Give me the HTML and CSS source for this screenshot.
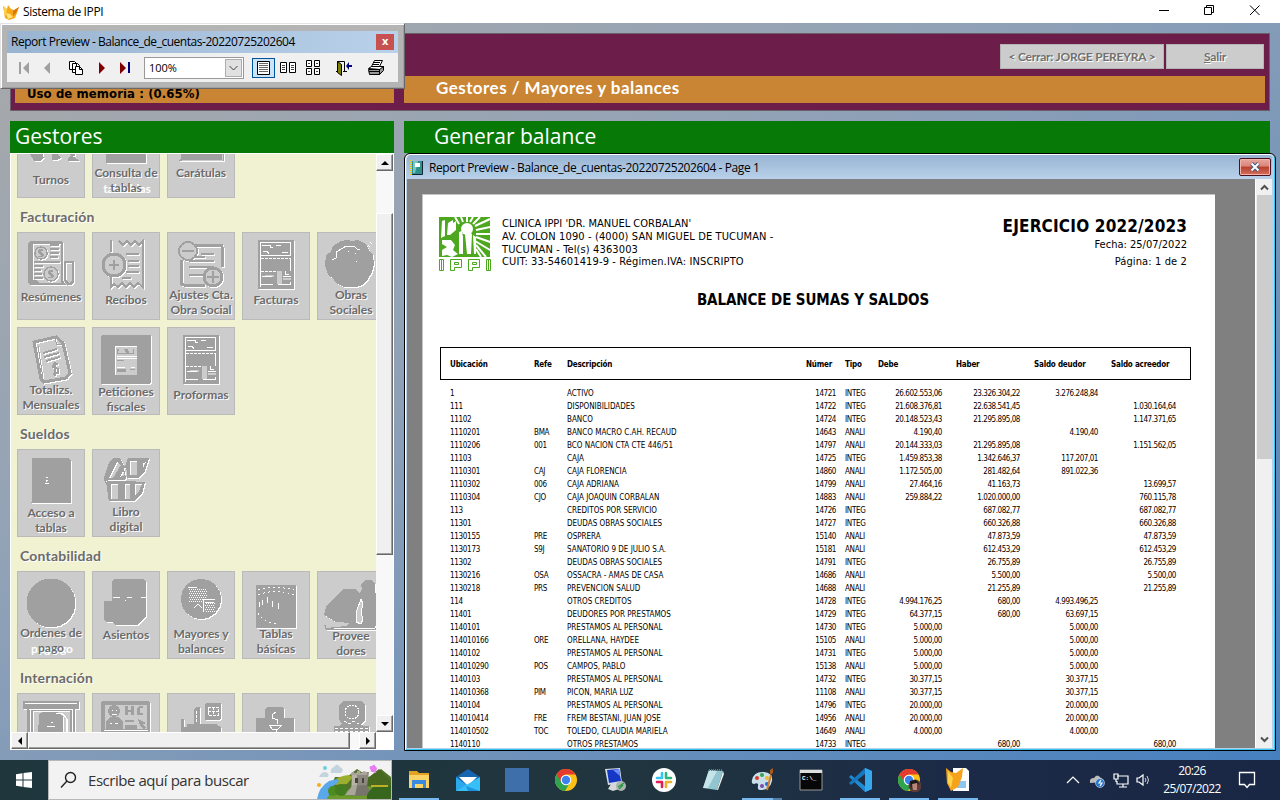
FILE: index.html
```html
<!DOCTYPE html>
<html lang="es">
<head>
<meta charset="utf-8">
<title>Sistema de IPPI</title>
<link rel="stylesheet" href="styles.css">
</head>
<body>
<svg width="0" height="0" class="defs">
  <defs>
    <symbol id="fox" viewBox="0 0 16 16"><path d="M0 2l4 3 1-4 3 4 3 1 5-3-2 6-2 5-6 2-4-2z" fill="#f7a81b"/><path d="M0 2l4 3-1 5-1 3z" fill="#fcd34a"/><path d="M10 7l6-4-3 6-3 3z" fill="#d9780c"/><path d="M3 9l4 1 3 3-5 2z" fill="#ffe57a"/></symbol>
    <symbol id="invoice" viewBox="0 0 68 58"><path d="M16 8h36v49H16z"/><path class="hl" d="M18.500 55V10.500h30M18.500 23.500h30M48.500 11v12M18.500 52.500h12M36 52.500h12v-3M48.500 27v12M20 13.500h8v2h3M34 13.500h5M21 19.500h4l2 2M40 20.500h6"/><path class="hl" stroke-dasharray="3 1" d="M19 26.500h30M19 39.500h15"/><path class="bg" d="M35 39h5v13h-5zM41 46h8v2h-8zM23 43h9v2h-9z"/><path class="hl" d="M20 44.500h10M41 44.500h8M43 39v3h4"/></symbol>
    <symbol id="chrome" viewBox="0 0 24 24"><circle cx="12" cy="12" r="11" fill="#fbc116"/><path d="M2.500 6.500A11 11 0 0 0 11 23l5.500-9.500L12 12l-4 1z" fill="#2da44e"/><path d="M2.500 6.500A11 11 0 0 1 21.600 6.600H12a5.500 5.500 0 0 0-5 7z" fill="#e53a2f"/><circle cx="12" cy="12" r="5.300" fill="#fff"/><circle cx="12" cy="12" r="4.200" fill="#3b82f0"/></symbol>
  </defs>
</svg>
<div class="screen">
  <header class="titlebar">
    <svg class="app-icon" width="16" height="16"><use href="#fox"/></svg>
    <span class="app-title">Sistema de IPPI</span>
    <svg class="win-controls" width="104" height="20" viewBox="0 0 104 20" fill="none" stroke="#000"><path d="M0 8.500h10M45.500 5.500h7v7h-7zM47.500 5.500v-2h7v7h-2M91 3.500l9.500 9.500M100.500 3.500L91 13"/></svg>
  </header>

  <main class="desktop">
    <section class="banner">
      <div class="banner-buttons"><button class="flat">&lt; Cerrar: JORGE PEREYRA &gt;</button><button class="flat salir"><u>S</u>alir</button></div>
      <div class="banner-strips">
        <div class="strip memory">Uso de memoria : (0.65%)</div>
        <div class="strip crumb">Gestores / Mayores y balances</div>
      </div>
    </section>

    <div class="columns">
      <section class="left">
        <h2 class="green">Gestores</h2>
        <div class="nav-frame">
          <div class="nav">
            <div class="row first">
              <div class="tile"><svg class="ico" viewBox="1 1 66 54"><path d="M12 42h14v5h2l-5 4h-6zM34 44h6l4 4-4 2h-5v-5zM52 42h6v4h-3l7 4v1H51v-3l3-2z"/></svg><span class="cap s7">Turnos</span></div>
              <div class="tile"><svg class="ico" viewBox="1 1 66 54"><path d="M15 20h39v33H14z"/></svg><span class="cap s1">Consulta de<br><span class="ghost">tablas</span></span></div>
              <div class="tile"><svg class="ico" viewBox="1 1 66 54"><path d="M15 20h42v31H11l3-2z"/><path class="lt" d="M15 50h40v-7h1v8H15z"/></svg><span class="cap s1">Carátulas</span></div>
            </div>
            <h3>Facturación</h3>
            <div class="row">
              <div class="tile"><svg class="ico" viewBox="1 1 66 54"><path fill-rule="evenodd" d="M15 9h28q3 0 3 3v36l3 5H16q-5 0-5-5V13q0-4 4-4zm1 3v36h4l2 3h22V12z"/><path fill-rule="evenodd" d="M47 29h10v22q-4 4-8 1l-2-4zm2 2v17l3 3 3-3V31z"/><g class="ln"><circle cx="24" cy="21" r="6"/><circle cx="34" cy="42" r="7"/><path d="M33 13h9M33 17h9M33 21h9M33 25h8M17 30h26M17 34h9M17 38h7M17 42h8M17 46h9"/></g><path d="M22 17h4v2h-3l4 4-1 2h-5v-1h3l-3-4zM32 38h4v2h-3l4 4-1 2h-5v-1h3l-3-4z"/></svg><span class="cap s3">Resúmenes</span></div>
              <div class="tile"><svg class="ico" viewBox="1 1 66 54"><g class="ln"><path stroke-width="2" d="M19 8v12M19 45v10l3-3 4 3 4-4 4 4 4-4 4 4 4-4 5 4V9l-4 4-4-4-4 4-4-4-4 4-4-4"/><circle cx="22" cy="33" r="11" stroke-width="3"/><path stroke-width="2" d="M22 28v10M17 33h10M34 22h13M36 29h11M36 34h11M34 40h13M30 46h9"/></g></svg><span class="cap s6">Recibos</span></div>
              <div class="tile"><svg class="ico" viewBox="1 1 66 54"><g class="ln"><path stroke-width="3" d="M28 13h25q2 0 2 2v20M14 28v23q0 2 3 2h21"/><circle cx="21" cy="19" r="9" stroke-width="2"/><circle cx="46" cy="45" r="9" stroke-width="3"/><path stroke-width="2" d="M15 19h12M46 39v12M40 45h12M34 22h13M22 29h25M22 35h25M22 43h15M28 25h10"/></g></svg><span class="cap s1">Ajustes Cta.<br>Obra Social</span></div>
              <div class="tile"><svg class="ico" viewBox="1 1 66 54"><use href="#invoice" width="68" height="58"/></svg><span class="cap s6">Facturas</span></div>
              <div class="tile"><svg class="ico" viewBox="1 1 66 54"><path d="M24 9l6-1 5 1 6-1 6 3 3 3 3 6 3 3 1 9-2 8-4 7-6 6-5 2H27l-8-4-3-5-5-3-3-10 1-10 5-3 2-6z"/><path class="hl" d="M15 28l4-2v-6l7-4 3-2h8l3 3h3M31 19h1M38 21h1M53 10h1M51 13h1M39 29h1"/></svg><span class="cap s1">Obras<br>Sociales</span></div>
            </div>
            <div class="row next">
              <div class="tile"><svg class="ico" viewBox="1 1 66 54"><g class="ln"><path stroke-width="3" d="M17 15l22-5 7 6 7 30-4 5-22 4-3-3z"/><path stroke-width="1" d="M21 19l5 32M38 11l2 7 7-1"/><path stroke-width="2" d="M26 26l14-4M27 30l15-4M29 34l14-4M41 37l-4 0-1 3 5 2 0 4-5 1M38 35v14"/></g></svg><span class="cap s1">Totalizs.<br>Mensuales</span></div>
              <div class="tile"><svg class="ico" viewBox="1 1 66 54"><rect x="9" y="8" width="50" height="49" rx="2"/><path class="bg" d="M23 20h22v28H23z"/><path class="hl" d="M23.500 48V19.500h21M25 29.500h20M25 31.500h20M25 40h8M39 40h4"/><path d="M25 22h17v5H25zM25 33h7v1h-7zM25 42h9v3h-9zM38 42h5v1h-5z"/><path class="bg" d="M27 22h5l2 4h-8zM36 22h5v4h-4z"/></svg><span class="cap s3">Peticiones<br>fiscales</span></div>
              <div class="tile"><svg class="ico" viewBox="1 1 66 54"><use href="#invoice" width="68" height="58"/></svg><span class="cap s6">Proformas</span></div>
            </div>
            <h3>Sueldos</h3>
            <div class="row">
              <div class="tile"><svg class="ico" viewBox="1 1 66 54"><path d="M15 9h37l2 3v42H14l1-2z"/><path class="hl" d="M29 28h2M28 34h4M30 31h1M29 33v-2"/></svg><span class="cap s2">Acceso a<br>tablas</span></div>
              <div class="tile"><svg class="ico" viewBox="1 1 66 54"><path fill-rule="evenodd" d="M12 29l5-15 4-5h7l7 13v6l-3 3H17l-4 3zm5 0h4l8-13-4-3zM28 28l3-6 2 4zM36 9h21l-4 13-6 7H34l-2-9zM38 12h7v14h-7zM51 14l3-1-3 6zM14 32h20l19 1-3 12-8 7H17l-1-5zM19 35h7v15h-7zM33 35h5v15h-5zM43 35h7l-4 9-3 2z"/></svg><span class="cap s1">Libro<br>digital</span></div>
            </div>
            <h3>Contabilidad</h3>
            <div class="row">
              <div class="tile"><svg class="ico" viewBox="1 1 66 54"><circle cx="34" cy="32" r="24.500"/></svg><span class="cap s0">Ordenes de<br><span class="ghost">pago</span></span></div>
              <div class="tile"><svg class="ico" viewBox="1 1 66 54"><path d="M22 8h30l2 3v35l-9 8H23l-3-3h-6l-2-3V30h8V10z"/><path class="hl" d="M21 26.500h7M35 26.500h5M49 26.500h5M33 29.500h1"/></svg><span class="cap s2">Asientos</span></div>
              <div class="tile"><svg class="ico" viewBox="1 1 66 54"><circle cx="34" cy="28" r="20"/><g class="dots"><path class="hl" stroke-dasharray="1 1" d="M22 18.500h17M22 22.500h17M22 26.500h17M22 30.500h13M38 34.500h9M38 38.500h9"/><path class="hl" stroke-dasharray="1 1" d="M23 20.500h17M23 24.500h17M23 28.500h15M39 32.500h9M39 36.500h9M39 40.500h9"/></g><path class="hl" d="M21 16.500h9M36.500 41V28.500h11M38 31.500h9M27 37l4-4 4 4"/></svg><span class="cap s1">Mayores y<br>balances</span></div>
              <div class="tile"><svg class="ico" viewBox="1 1 66 54"><path d="M14 14h40v43H14z"/><path class="hl" stroke-dasharray="2 3" d="M16 19q18-5 36 0M16 24q18-7 36 0M16 42q6 10 18 11"/><path class="hl" d="M17.500 31v5M20.500 29v5M25.500 26v6M30.500 30v6M36.500 32v6"/></svg><span class="cap s1">Tablas<br>básicas</span></div>
              <div class="tile"><svg class="ico" viewBox="1 1 66 54"><path d="M7 44l2-8 10-11 7-7h12l5 4 2-4-1-5 4-4h7l3 4v8l5 9 2 29H9l-2-5h17z"/><path class="bg" d="M44 28l-4 11-1 12 5 2 2-5-2-7 2-8zM9 50l24 2-4 3-20 2z"/><path class="hl" d="M44 28l-4 11-1 12 5 2 2-5-2-7 2-8zM17 57h41l3-4"/></svg><span class="cap s3">Provee<br>dores</span></div>
            </div>
            <h3>Internación</h3>
            <div class="row">
              <div class="tile"><svg class="ico" viewBox="1 1 66 54"><path fill-rule="evenodd" d="M6 8h56v8h-4v28H10V16H6zm10 10v26h5l1-23 4-2h14l6 4v21h7V18z"/><path class="hl" d="M8 10.500h52M12 16.500h44M13.500 17v25M55.500 17v25M34 29h2M30 33h8M39 20h6l4 5v16"/></svg></div>
              <div class="tile"><svg class="ico" viewBox="1 1 66 54"><rect x="9" y="8" width="49" height="42" rx="3"/><path class="bg" d="M13 12h42v24H13z"/><circle cx="22" cy="18" r="6"/><path d="M14 36v-8l5-4h7l5 4v8zM33 13h3v4h3v-4h3v9h-3v-3h-3v3h-3zM47 13h4v2h-3v5h3v2h-6v-7zM33 27h9v2h-9zM33 32h12v4H33zM46 26l8 4-3 1 3 4-3 1-3-4z"/><path class="hl" d="M20 17h1M24 17h1M20 21h5M18 30h2M23 30h3M12 37.500h44"/></svg></div>
              <div class="tile"><svg class="ico" viewBox="1 1 66 54"><rect x="38" y="10" width="16" height="17" rx="2"/><path d="M14 26h3v8h3v-3h29l5 3v14H14zM27 16l3-2h3v18h-6z"/><path class="hl" stroke-dasharray="3 1" d="M41 14h10v8H41zM41 18h10M46 14v8M29 18v12"/></svg></div>
              <div class="tile"><svg class="ico" viewBox="1 1 66 54"><path d="M25 14h16l1 2v9h10v20H14V25h9v-9z"/><path class="hl" d="M34 19l-4 3v3l6 2-1 4M27 32h13l-4 4h-6zM34 36v5"/></svg></div>
              <div class="tile"><svg class="ico" viewBox="1 1 66 54"><path d="M26 8h18l4 4v15l-4 5 4 1h4v7H17v-7h5l3-2-3-5V13z"/><circle class="hl" stroke-dasharray="2 1" cx="35" cy="19" r="7"/><path class="hl" stroke-dasharray="3 2" d="M18 35h34M18 38h34M27 28l5 3 5-3 5 3"/></svg></div>
            </div>
          </div>
          <div class="vbar"><i class="sb"><b class="tri up"></b></i><i class="vthumb"></i><i class="sb"><b class="tri down"></b></i></div>
          <div class="hbar"><i class="sb"><b class="tri lf"></b></i><i class="hthumb"></i><i class="sb end"><b class="tri rt"></b></i></div>
        </div>
      </section>

      <section class="right">
        <h2 class="green wide">Generar balance</h2>
        <div class="window">
          <div class="win-title">
            <svg width="13" height="15" viewBox="0 0 13 15"><path d="M1 0v15" stroke="#e8d000" stroke-width="2" stroke-dasharray="1 1"/><path d="M2 1h10v13H2z" fill="#2f8f8b"/><path d="M3 1h5L5 13H3z" fill="#7cc4bf"/><path d="M5 3h5v4H5z" fill="#fff"/><path d="M12.500 1v13.500H2" stroke="#123" fill="none"/></svg>
            <span class="win-name">Report Preview - Balance_de_cuentas-20220725202604 - Page 1</span>
            <span class="close"><svg width="12" height="10" viewBox="0 0 12 10"><path d="M2.500 1.500l7 7M9.500 1.500l-7 7" stroke="#4a5a7a" stroke-width="4"/><path d="M2.500 1.500l7 7M9.500 1.500l-7 7" stroke="#fff" stroke-width="2"/></svg></span>
          </div>
          <div class="win-body">
            <div class="gray">
              <article class="page">
                <div class="head">
                  <svg width="52" height="54" viewBox="0 0 52 54"><path d="M0 0h51v40H0z" fill="#4ea81f"/><g fill="#fff"><path d="M3 4l3-1v16l-4 2zM9 6l5-3v3l3-2v9l-6 5H8zM3 23h9l4 5-2 5 5 4-6 3-5-2-5 1v-6l5-3-5-3zM20 15l3-1 1 6v17h-4V22zM26 17l4-2 3 2-1 20h-4zM34 18l3 2v17h-2z"/><circle cx="28" cy="12" r="6"/></g><g stroke="#fff" stroke-width="2"><path d="M20 7l-4-7M24 5l-2-5M28 5V0M31 5l3-5M34 7l7-7M36 9l15-7M37 13l14-3M37 17l14 0M37 20l14 5M36 24l15 9M37 28l10 12M37 32l5 8"/></g><g fill="none" stroke="#4ea81f" stroke-width="1"><path d="M.5 42.500h4v11h-4zM2.500 43v10M11.500 53.500v-11h11v8h-7v3zM15.500 45.500h4v2h-4zM29.500 53.500v-11h11v8h-7v3zM33.500 45.500h4v2h-4zM47.500 42.500h4v11h-4zM49.500 43v10"/></g></svg>
                  <address><span>CLINICA IPPI 'DR. MANUEL CORBALAN'</span><span class="wider">AV. COLON 1090 - (4000) SAN MIGUEL DE TUCUMAN -</span><span class="wider">TUCUMAN - Tel(s) 4363003</span><span class="wider">CUIT: 33-54601419-9 - Régimen.IVA: INSCRIPTO</span></address>
                  <div class="meta"><strong>EJERCICIO 2022/2023</strong><span>Fecha: 25/07/2022</span><span class="wider">Página: 1 de 2</span></div>
                </div>
                <h1>BALANCE DE SUMAS Y SALDOS</h1>
                <div class="thead"><span>Ubicación</span><span>Refe</span><span>Descripción</span><span>Númer</span><span>Tipo</span><span>Debe</span><span>Haber</span><span>Saldo deudor</span><span>Saldo acreedor</span></div>
                <table class="rows">
                  <colgroup><col class="c1"><col class="c2"><col class="c3"><col class="c4"><col class="c5"><col class="c6"><col class="c7"><col class="c8"><col class="c9"></colgroup>
                  <tbody>
                  <tr><td>1<td><td>ACTIVO<td>14721<td>INTEG<td>26.602.553,06<td>23.326.304,22<td>3.276.248,84<td>
                  <tr><td>111<td><td>DISPONIBILIDADES<td>14722<td>INTEG<td>21.608.376,81<td>22.638.541,45<td><td>1.030.164,64
                  <tr><td>11102<td><td>BANCO<td>14724<td>INTEG<td>20.148.523,43<td>21.295.895,08<td><td>1.147.371,65
                  <tr><td>1110201<td>BMA<td>BANCO MACRO C.AH. RECAUD<td>14643<td>ANALI<td>4.190,40<td><td>4.190,40<td>
                  <tr><td>1110206<td>001<td>BCO NACION CTA CTE 446/51<td>14797<td>ANALI<td>20.144.333,03<td>21.295.895,08<td><td>1.151.562,05
                  <tr><td>11103<td><td>CAJA<td>14725<td>INTEG<td>1.459.853,38<td>1.342.646,37<td>117.207,01<td>
                  <tr><td>1110301<td>CAJ<td>CAJA FLORENCIA<td>14860<td>ANALI<td>1.172.505,00<td>281.482,64<td>891.022,36<td>
                  <tr><td>1110302<td>006<td>CAJA ADRIANA<td>14799<td>ANALI<td>27.464,16<td>41.163,73<td><td>13.699,57
                  <tr><td>1110304<td>CJO<td>CAJA JOAQUIN CORBALAN<td>14883<td>ANALI<td>259.884,22<td>1.020.000,00<td><td>760.115,78
                  <tr><td>113<td><td>CREDITOS POR SERVICIO<td>14726<td>INTEG<td><td>687.082,77<td><td>687.082,77
                  <tr><td>11301<td><td>DEUDAS OBRAS SOCIALES<td>14727<td>INTEG<td><td>660.326,88<td><td>660.326,88
                  <tr><td>1130155<td>PRE<td>OSPRERA<td>15140<td>ANALI<td><td>47.873,59<td><td>47.873,59
                  <tr><td>1130173<td>S9J<td>SANATORIO 9 DE JULIO S.A.<td>15181<td>ANALI<td><td>612.453,29<td><td>612.453,29
                  <tr><td>11302<td><td>DEUDAS OBRAS SOCIALES<td>14791<td>INTEG<td><td>26.755,89<td><td>26.755,89
                  <tr><td>1130216<td>OSA<td>OSSACRA - AMAS DE CASA<td>14686<td>ANALI<td><td>5.500,00<td><td>5.500,00
                  <tr><td>1130218<td>PRS<td>PREVENCION SALUD<td>14688<td>ANALI<td><td>21.255,89<td><td>21.255,89
                  <tr><td>114<td><td>OTROS CREDITOS<td>14728<td>INTEG<td>4.994.176,25<td>680,00<td>4.993.496,25<td>
                  <tr><td>11401<td><td>DEUDORES POR PRESTAMOS<td>14729<td>INTEG<td>64.377,15<td>680,00<td>63.697,15<td>
                  <tr><td>1140101<td><td>PRESTAMOS AL PERSONAL<td>14730<td>INTEG<td>5.000,00<td><td>5.000,00<td>
                  <tr><td>114010166<td>ORE<td>ORELLANA, HAYDEE<td>15105<td>ANALI<td>5.000,00<td><td>5.000,00<td>
                  <tr><td>1140102<td><td>PRESTAMOS AL PERSONAL<td>14731<td>INTEG<td>5.000,00<td><td>5.000,00<td>
                  <tr><td>114010290<td>POS<td>CAMPOS, PABLO<td>15138<td>ANALI<td>5.000,00<td><td>5.000,00<td>
                  <tr><td>1140103<td><td>PRESTAMOS AL PERSONAL<td>14732<td>INTEG<td>30.377,15<td><td>30.377,15<td>
                  <tr><td>114010368<td>PIM<td>PICON, MARIA LUZ<td>11108<td>ANALI<td>30.377,15<td><td>30.377,15<td>
                  <tr><td>1140104<td><td>PRESTAMOS AL PERSONAL<td>14796<td>INTEG<td>20.000,00<td><td>20.000,00<td>
                  <tr><td>114010414<td>FRE<td>FREM BESTANI, JUAN JOSE<td>14956<td>ANALI<td>20.000,00<td><td>20.000,00<td>
                  <tr><td>114010502<td>TOC<td>TOLEDO, CLAUDIA MARIELA<td>14649<td>ANALI<td>4.000,00<td><td>4.000,00<td>
                  <tr><td>1140110<td><td>OTROS PRESTAMOS<td>14733<td>INTEG<td><td>680,00<td><td>680,00
                  </tbody>
                </table>
              </article>
            </div>
            <div class="wbar"><svg width="15" height="15" viewBox="0 0 15 15" class="chev"><path d="M4 9.500L7.500 6 11 9.500"/></svg><i class="wthumb"></i><svg width="15" height="15" viewBox="0 0 15 15" class="chev last"><path d="M4 5.500L7.500 9 11 5.500"/></svg></div>
          </div>
        </div>
      </section>
    </div>
  </main>

  <footer class="taskbar">
    <div class="start"><svg width="16" height="16" viewBox="0 0 16 16" fill="#fff"><path d="M0 2.200L6.500 1.300v6.200H0zM7.500 1.100L16 0v7.500H7.500zM0 8.500h6.500v6.200L0 13.800zM7.500 8.500H16V16l-8.500-1.100z"/></svg></div>
    <div class="search">
      <svg width="18" height="18" viewBox="0 0 18 18" fill="none" stroke="#222" stroke-width="1.400"><circle cx="10.500" cy="6.500" r="5"/><path d="M7 10L1 16.500"/></svg>
      <span>Escribe aquí para buscar</span>
      <svg class="art" width="74" height="38" viewBox="0 0 74 38"><path d="M18 16l12 0 10-8 12 8 12-8 10 8v22H8z" fill="#52712a"/><path d="M50 18L62 8l12 12v8H48z" fill="#47691f"/><path d="M20 17q8-3 12-3l4 2-6 7-12 1z" fill="#9cae2f"/><path d="M0 38q2-12 12-18l8-2q4 2-1 5-8 4-7 15z" fill="#5aa8ea"/><path d="M10 38q0-6 14-6l16-7 34 1v12z" fill="#6d9a2c"/><path d="M34 12l18-1-2 14-14 2z" fill="#8d887d"/><path d="M34 12l3-2v2h3v-2h3v2h3v-2l4 1v3H34z" fill="#aaa599"/><path d="M35 14h5v13l-6 6z" fill="#b8b2a4"/><path d="M28 34l7-9 15-1 4 10-12 1z" fill="#77746c"/><path d="M28 34l7-9h5l-2 9z" fill="#aaa698"/><path d="M38 17h3v5h-3zM45 17h2v5h-2z" fill="#444"/><circle cx="16" cy="30" r="5" fill="#4d8a1f"/><circle cx="24" cy="29" r="6" fill="#447c20"/><path d="M50 34q6-12 14-8l10-1v13H50z" fill="#36671d"/><path d="M54 24h17v2H54z" fill="#bfae28"/><path d="M14 12h10q4-4-1-6-3-5-6 0-4 1-3 6zM2 16h9q2-4-3-5-4 0-6 5z" fill="#c4d4df"/><circle cx="8" cy="7" r="2" fill="#69d1df"/><circle cx="2" cy="24" r="2" fill="#f7ab20"/><path d="M53 5q2 1 3-1 2-1 2 1 2 1 2 3-1 1-1 4l-3-1q-3 0-2-2-2-1-1-4z" fill="#e37df0"/></svg>
    </div>
    <div class="apps">
      <div class="app on"><svg width="24" height="24" viewBox="0 0 24 24"><path d="M2 3h8l2 2h10v15H2z" fill="#e3a322"/><path d="M2 7h20v13H2z" fill="#fbd468"/><path d="M5 12h14v8h-3v-4h-8v4H5z" fill="#3a8be0"/></svg></div>
      <div class="app"><svg width="24" height="24" viewBox="0 0 24 24"><path d="M0 9l12-8 12 8v14H0z" fill="#1565b0"/><path d="M3 9h18l-9 9z" fill="#fff"/><path d="M0 9l12 9L0 23z" fill="#2ba9ec"/><path d="M24 9v14H0z" fill="#36c0f7"/><path d="M24 23H12l-2-5z" fill="#1e94df"/></svg></div>
      <div class="app"><svg width="24" height="24" viewBox="0 0 24 24"><path d="M0 0h24v24H0z" fill="#3e6fab"/></svg></div>
      <div class="app"><svg width="24" height="24"><use href="#chrome"/></svg></div>
      <div class="app"><svg width="24" height="24" viewBox="0 0 24 24"><path d="M2 1l15-1 2 15-14 2z" fill="#d6dde6"/><path d="M4 2l12-1 2 12-12 2z" fill="#1537c5"/><path d="M10 2l6-1 1 7z" fill="#6b8cff"/><path d="M8 16l6-1 5 5-9 3-5-2z" fill="#d6d8da"/><circle cx="18" cy="18" r="5" fill="#aab5b1"/><path d="M15 19l3-2 3-2M16 21l4-4" stroke="#2a9b3f" stroke-width="1.500"/></svg></div>
      <div class="app"><svg width="24" height="24" viewBox="0 0 24 24"><circle cx="12" cy="12" r="12" fill="#fff"/><g stroke-width="2.600" stroke-linecap="round"><path d="M10 5v5M5 10h5" stroke="#36c5f0"/><path d="M14 5v5M14 10h5" stroke="#2eb67d"/><path d="M14 14h5M14 14v5" stroke="#ecb22e"/><path d="M5 14h5M10 14v5" stroke="#e01e5a"/></g></svg></div>
      <div class="app"><svg width="24" height="24" viewBox="0 0 24 24"><path d="M8 2l14 1-6 19-14-2z" fill="#91c5cf"/><path d="M8 2l8 1-9 17-5 0z" fill="#c5e4e9"/><path d="M22 3l1 3-6 16-1 0z" fill="#eee"/><path d="M8 2h14" stroke="#68757d" stroke-width="2" stroke-dasharray="1 1"/></svg></div>
      <div class="app paint"><svg width="24" height="24" viewBox="0 0 24 24"><path d="M2 12Q4 3 14 4q9 1 8 9-2 9-11 9-4 0-3-4t-4-2q-3 0-2-4z" fill="#c9dfea"/><circle cx="7" cy="10" r="2" fill="#d83b2c"/><circle cx="12" cy="7" r="2" fill="#36a24b"/><circle cx="17" cy="10" r="2" fill="#f0b72b"/><circle cx="17" cy="16" r="2" fill="#2867c7"/><circle cx="12" cy="18" r="2" fill="#7a4bb4"/><path d="M17 22L21 7" stroke="#cf7f2f" stroke-width="2"/><path d="M20 7l0-5 3-2 0 5z" fill="#a85a1b"/></svg></div>
      <div class="app"><svg width="24" height="24" viewBox="0 0 24 24"><path d="M1 2h22v20H1z" fill="#070707" stroke="#999"/><path d="M1 2h22v3H1z" fill="#ddd"/><text x="3" y="12" class="cmd">C:\_</text></svg></div>
      <div class="app on"><svg width="24" height="24" viewBox="0 0 24 24"><path d="M17 0l7 3v18l-7 3L1 9l2-2 14 11z" fill="#1f8ad2"/><path d="M17 0l0 6L3 17l-2-2z" fill="#1677bd"/><path d="M17 0l7 3v18l-7 3z" fill="#36a8ee"/></svg></div>
      <div class="app on"><svg width="24" height="24" viewBox="0 0 24 24"><use href="#chrome"/><circle cx="18" cy="18" r="6.500" fill="#5b3c36"/><path d="M15 15h5v7h-4z" fill="#b98778"/><path d="M13 13l6-1 4 5-3-2-5 1-1 6z" fill="#191919"/></svg></div>
      <div class="app on"><svg width="24" height="24" viewBox="0 0 24 24"><path d="M7 0h13l3 3v20H7z" fill="#fff"/><path d="M11 13h9v7h-9z" fill="#8ec5ed"/><path d="M0 0l5 4 5 1 7-5-1 9-4 10-7 4-4-8z" fill="#f6a21b"/><path d="M2 3l5 7-2 10-3-5z" fill="#ffd346"/></svg></div>
    </div>
    <div class="tray">
      <svg width="84" height="20" viewBox="0 0 84 20" fill="none" stroke="#fff" stroke-width="1.200"><path d="M1 13l6-6 6 6"/><path d="M24 13q-1-5 4-5 3-5 7 0 3 1 3 4z" fill="#bbb" stroke="none"/><circle cx="34" cy="13" r="4.500" fill="#2875c7" stroke="#fff" stroke-width=".5"/><path d="M35 10l-2 3h3l-2 3"/><path d="M51 6h11v8H51v-3M57 14v3M53 17h8M48 4h4v5h-4zM50 9v3"/><path d="M71 8h2l4-3v10l-4-3h-2z"/><path d="M79 8q2 2 0 4M81 6q3 4 0 8" stroke-width=".8"/></svg>
      <div class="clock"><span>20:26</span><span>25/07/2022</span></div>
      <svg width="18" height="20" viewBox="0 0 18 20" fill="none" stroke="#fff" stroke-width="1.300"><path d="M1.500 2.500h15v12h-5l-2.500 3-2.500-3h-5z"/></svg>
    </div>
  </footer>

  <aside class="floatbar">
    <div class="float-title"><span>Report Preview - Balance_de_cuentas-20220725202604</span><b class="fx">x</b></div>
    <div class="tools">
      <svg width="120" height="22" viewBox="0 0 120 22"><g fill="#a0a0a0"><path d="M12 5h2v12h-2zM22 5v12l-6-6zM43 5v12l-6-6z"/></g><g fill="#fff" stroke="#000"><path d="M62.500 4.500h5l2 2v6h-7zM65.500 6.500h5l2 2v7h-7z"/><path d="M68.500 9.500h4l3 3v5h-7z"/><path d="M72.500 9.500v3h3" fill="none"/></g><path d="M92 5v12l6-6zM113 5v12l6-6z" fill="#800000"/></svg>
      <svg width="10" height="22" viewBox="0 0 10 22"><path d="M1 5h2v11H1z" fill="#000080"/></svg>
      <div class="combo"><span>100%</span><i><svg width="11" height="8" viewBox="0 0 11 8" fill="none" stroke="#444"><path d="M1.500 2L5.500 6l4-4"/></svg></i></div>
      <div class="sel"><svg width="13" height="14" viewBox="0 0 13 14"><path d="M.5.500h12v13H.5z" fill="#fff" stroke="#000"/><path d="M2 2.500h9M2 4.500h9M2 6.500h9M2 8.500h9M2 10.500h9" stroke="#666"/></svg></div>
      <svg width="120" height="22" viewBox="0 0 120 22"><g fill="#fff" stroke="#000"><path d="M5.500 5.500h6v10h-6zM14.500 5.500h6v10h-6zM31.500 3.500h5v6h-5zM39.500 3.500h5v6h-5zM31.500 11.500h5v6h-5zM39.500 11.500h5v6h-5z"/><path d="M7 8.500h3M7 10.500h3M7 12.500h3M16 8.500h3M16 10.500h3M16 12.500h3M33 6.500h2M41 6.500h2M33 14.500h2M41 14.500h2" stroke="#444"/></g><path d="M62.500 15V4.500h7V15M61 14.500h3M68 14.500h4" fill="none" stroke="#000"/><path d="M62.500 4.500l4 3v11l-4-3z" fill="#808000" stroke="#000"/><path d="M71 9l3-4v3h3v2h-3v3z" fill="#000080"/><g stroke="#000" fill="#fff"><path d="M96.500 9.500l3-6h8l-3 6zM93.500 11.500l3-2h12l-3 3z"/><path d="M93.500 12.500h11v5h-10zM104.500 12.500l4-3v4l-4 4z" fill="#999"/><path d="M99 5.500h6M98 7.500h6M94 14.500h10" fill="none"/></g></svg>
    </div>
  </aside>
</div>
</body>
</html>
```
FILE: styles.css
```css
* { box-sizing: border-box; }
body { margin: 0; font-family: "Open Sans", "Noto Sans", sans-serif; font-size: 12px; color: #000; }
h1, h2, h3 { margin: 0; }
i, address { font-style: normal; }
svg { flex: none; display: block; }
.defs { position: absolute; }
.screen { position: relative; width: 1280px; height: 800px; overflow: hidden; display: flex; flex-direction: column; }

.titlebar { height: 23px; background: #fff; display: flex; align-items: center; padding: 0 17px 0 3px; flex: none; }
.app-title { margin-left: 4px; font-size: 12px; letter-spacing: -.35px; }
.win-controls { margin-left: auto; }

.desktop { height: 737px; flex: none; padding: 10px 4px 0 10px; background: linear-gradient(150deg, #a8a9aa 0, #93a3b6 35%, #7896b9 62%, #4680bf 100%); }
.banner { width: 1260px; height: 78px; background: #6d1d49; border: 1px solid #6b6068; padding: 10px 4px 0; }
.banner-buttons { display: flex; justify-content: flex-end; gap: 2px; height: 25px; padding-right: 1px; }
.flat { width: 164px; height: 25px; padding: 0; border: 1px solid #b4b4b4; background: #ccc; color: #707070; text-shadow: 1px 1px #fff; font: 700 12px Lato, sans-serif; letter-spacing: -.22px; }
.salir { width: 98px; }
.banner-strips { display: flex; gap: 10px; margin-top: 7px; }
.strip { height: 27px; background: #c98434; }
.memory { width: 379px; padding-left: 12px; font: 700 13px/35px "DejaVu Sans Condensed", "DejaVu Sans", sans-serif; letter-spacing: .08px; }
.crumb { width: 861px; padding-left: 32px; color: #fff; font: 700 17px/23px Lato, sans-serif; letter-spacing: .45px; }

.columns { display: flex; gap: 10px; margin-top: 10px; }
.left { width: 384px; }
.right { width: 866px; }
.green { height: 32px; background: #067906; color: #fff; font: 400 21px/31px "Open Sans", sans-serif; padding-left: 5px; }
.wide { padding-left: 30px; }

.nav-frame { width: 384px; height: 597px; border: 1px solid #fff; display: grid; grid-template: 578px 17px / 365px 17px; background: #fff; }
.nav { overflow: hidden; background: #f1f2d1; padding-left: 6px; }
.row { display: flex; gap: 7px; width: 380px; }
.first { margin-top: -44px; }
.next { margin-top: 7px; }
.nav h3 { height: 34px; padding: 1px 0 0 3px; font: 700 14px/35px Lato, "Liberation Sans", sans-serif; color: #6b6b6b; text-shadow: 1px 1px #fff; letter-spacing: .2px; }
.tile { width: 68px; height: 88px; flex: none; background: #ccc; border: 1px solid #bababa; display: flex; flex-direction: column; align-items: center; }
.ico { width: 66px; height: 54px; margin-bottom: -1px; overflow: visible; fill: #a0a0a0; filter: drop-shadow(1px 1px 0 #fff); shape-rendering: crispEdges; }
.lt, .bg { fill: #ccc; }
.ln { fill: #ccc; stroke: #a0a0a0; stroke-width: 1.5; }
.ln path { fill: none; }
.hl { fill: none; stroke: #fff; stroke-width: 1; }
.cap { position: relative; font: 700 12px/15px Lato, sans-serif; color: #6b6b6b; text-align: center; text-shadow: 1px 1px #fff; white-space: nowrap; }
.s1 { margin-top: 1px; }
.s2 { margin-top: 2px; }
.s3 { margin-top: 3px; }
.s6 { margin-top: 6px; }
.s7 { margin-top: 8px; }
.ghost { text-shadow: 1px 1px #fff, -7px 1px #fff, 9px 1px #fff; }

.sb { width: 17px; height: 17px; background: #f0f0f0; border: 1px solid; border-color: #fff #696969 #696969 #fff; box-shadow: inset -1px -1px #a0a0a0; display: grid; place-items: center; flex: none; }
.tri { width: 0; height: 0; border: 4px solid transparent; }
.up { border-bottom-color: #000; border-top: 0; }
.down { border-top-color: #000; border-bottom: 0; }
.lf { border-right-color: #000; border-left: 0; }
.rt { border-left-color: #000; border-right: 0; }
.vbar { background: #f8f8f8; display: flex; flex-direction: column; }
.vthumb { height: 342px; margin: 42px 0 160px; background: #f0f0f0; border: 1px solid; border-color: #fff #696969 #696969 #fff; box-shadow: inset -1px -1px #a0a0a0; }
.hbar { background: #f8f8f8; display: flex; }
.hthumb { width: 322px; background: #f0f0f0; border: 1px solid; border-color: #fff #696969 #696969 #fff; box-shadow: inset -1px -1px #a0a0a0; }
.end { margin-left: auto; }

.window { width: 872px; height: 598px; border: 1px solid #000; border-radius: 6px 6px 0 0; background: #b7d0ea; box-shadow: inset 1px 1px #fff, inset -1px -1px #33c6ee; padding: 1px 3px 2px 2px; }
.win-title { height: 24px; margin: 0; background: linear-gradient(#98b4d2, #b9d1ea); border-radius: 4px 4px 0 0; display: flex; align-items: center; padding: 0 1px 0 3px; }
.win-name { margin-left: 6px; letter-spacing: -.41px; white-space: nowrap; }
.close { margin-left: auto; width: 32px; height: 18px; border: 1px solid #4a1220; border-radius: 2px; background: linear-gradient(#e8a79e 0, #d98478 45%, #b93f2c 50%, #d4705c); box-shadow: inset 0 0 0 1px #f0b4a8; display: grid; place-items: center; }
.win-body { display: flex; height: 569px; }
.gray { width: 849px; background: #808080; padding: 15px 0 0 15px; overflow: hidden; }
.page { width: 793px; height: 554px; background: #fff; border-top: 1px solid #c4c4c4; border-left: 1px solid #c4c4c4; padding: 22px 0 0 16px; overflow: hidden; font-family: "DejaVu Sans Condensed", "DejaVu Sans", sans-serif; }
.wbar { width: 17px; background: #f0f0f0; display: flex; flex-direction: column; align-items: center; border-left: 1px solid #fff; }
.chev { fill: none; stroke: #505050; stroke-width: 2; margin-top: 1px; }
.wthumb { width: 15px; height: 264px; background: #cdcdcd; }
.last { margin-top: auto; margin-bottom: 1px; }

.head { display: flex; height: 62px; width: 748px; }
address { margin-left: 11px; padding-top: 1px; display: flex; flex-direction: column; font-size: 11px; line-height: 12.800px; white-space: nowrap; }
.wider { letter-spacing: .12px; }
.meta { margin-left: auto; display: flex; flex-direction: column; align-items: flex-end; font-size: 11px; line-height: 17px; }
.meta strong { font-size: 17px; line-height: 19px; letter-spacing: .18px; margin-right: -.18px; }
.page h1 { font-size: 15px; line-height: 20px; width: 748px; text-align: center; margin-top: 11px; letter-spacing: -.1px; }
.thead, .rows { font-size: 8px; }
.thead { margin: 37px 0 0 1px; width: 751px; height: 33px; border: 1px solid #000; padding: 1px 0 0 9px; display: grid; grid-template-columns: 84px 33px 239px 39px 33px 78px 78px 77px 79px; align-items: center; font-weight: 700; letter-spacing: -.2px; white-space: nowrap; }
.rows { table-layout: fixed; width: 736px; margin: 7px 0 0 11px; border-collapse: collapse; white-space: nowrap; letter-spacing: -.3px; }
.rows td { padding: 0; height: 13px; line-height: 13px; }
.rows td:nth-child(3) { letter-spacing: 0; }
.rows td:nth-child(4), .rows td:nth-child(n+6) { text-align: right; letter-spacing: -.45px; }
.rows td:nth-child(4) { padding-right: 9px; }
.rows td:nth-child(6), .rows td:nth-child(7) { padding-right: 14px; }
.rows td:nth-child(8) { padding-right: 13px; }
.rows td:nth-child(9) { padding-right: 10px; }
.c1 { width: 84px; } .c2 { width: 33px; } .c3 { width: 239px; } .c4 { width: 39px; } .c5 { width: 33px; }
.c6, .c7 { width: 78px; } .c8 { width: 77px; } .c9 { width: 75px; }

.taskbar { height: 40px; flex: none; display: flex; background: linear-gradient(90deg, #1f363d 0, #20353f 50%, #1b2a47 75%, #1a2744 100%); color: #fff; }
.start { width: 48px; display: grid; place-items: center; }
.search { width: 344px; height: 40px; background: #f2f2f2; border: 1px solid #b8b8b8; color: #333; display: flex; align-items: center; padding-left: 11px; font-size: 15px; }
.search span { margin-left: 10px; letter-spacing: -.45px; white-space: nowrap; }
.art { margin-left: auto; }
.apps { display: flex; margin-left: 2px; }
.app { width: 49px; height: 40px; display: grid; place-items: center; }
.on { background: linear-gradient(#76b9f0, #76b9f0) 50% 100% / 40px 2px no-repeat; }
.paint { background: linear-gradient(90deg, #76b9f0 31px, #4f7faa 31px) 50% 100% / 40px 2px no-repeat; }
.cmd { font: 700 6px "Liberation Mono", monospace; fill: #fff; }
.tray { margin-left: 84px; display: flex; align-items: center; }
.clock { width: 84px; display: flex; flex-direction: column; align-items: center; line-height: 18px; margin: 0 4px 0 0; letter-spacing: -.6px; }

.floatbar { position: absolute; left: 0; top: 23px; width: 405px; height: 66px; background: #b4b4b4; border: 1px solid; border-color: #e3e3e3 #696969 #696969 #e3e3e3; box-shadow: inset 1px 1px #fff, inset -1px -1px #a0a0a0; padding: 7px 6px 6px; }
.float-title { height: 22px; background: linear-gradient(90deg, #99b4d1, #b9d1ea); display: flex; align-items: center; justify-content: space-between; padding: 0 4px 1px; letter-spacing: -.47px; white-space: nowrap; }
.fx { width: 18px; height: 16px; background: #c75050; color: #fff; text-align: center; line-height: 13px; font-size: 11px; }
.tools { height: 29px; background: #f0f0f0; display: flex; align-items: center; }
.combo { width: 100px; height: 22px; margin-left: 7px; border: 1px solid #999; background: #fff; display: flex; align-items: center; justify-content: space-between; padding: 1px 1px 1px 4px; font-size: 11px; }
.combo i { width: 17px; height: 18px; background: #e1e1e1; border: 1px solid #adadad; display: grid; place-items: center; }
.sel { width: 23px; height: 20px; margin-left: 8px; border: 1px solid #005499; background: #cce4f7; display: grid; place-items: center; }
```
